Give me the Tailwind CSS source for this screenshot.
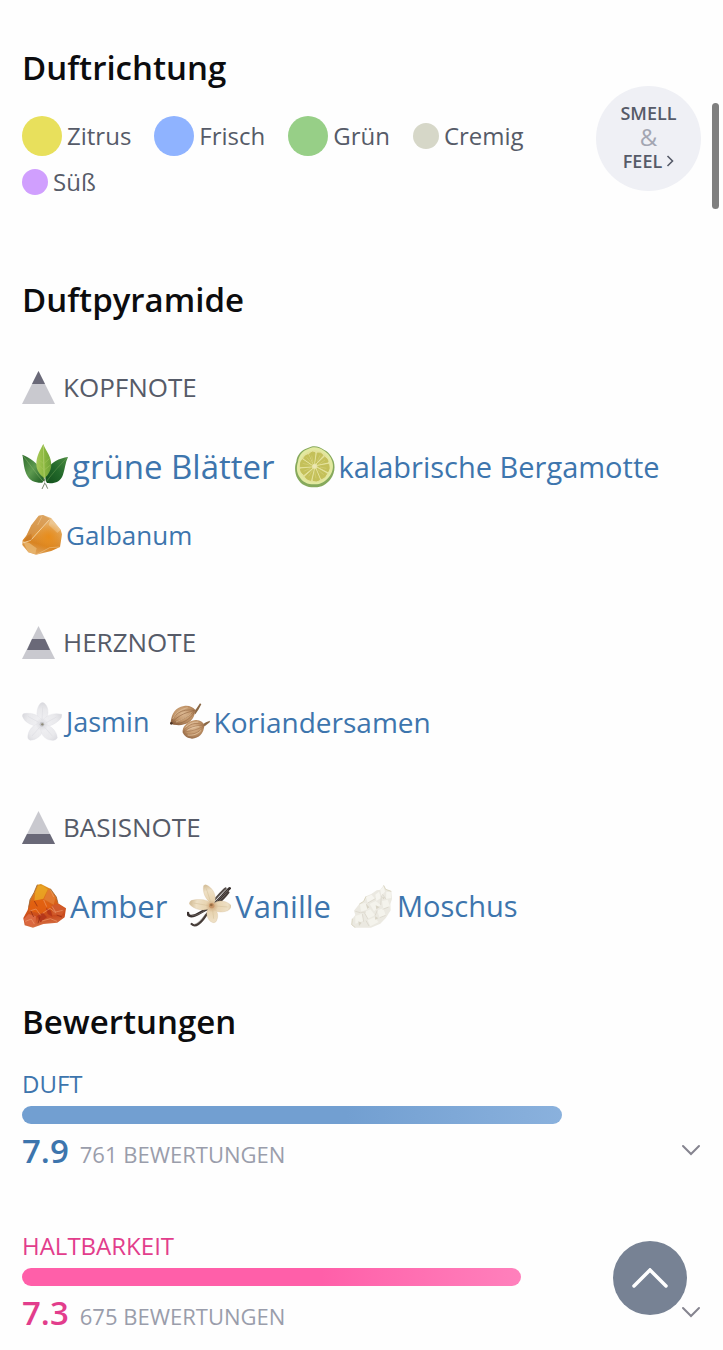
<!DOCTYPE html>
<html lang="de">
<head>
    <meta charset="UTF-8">
    <meta name="viewport" content="width=device-width, initial-scale=1.0">
    <title>Duftpyramide und Bewertungen</title>
    <script src="https://cdn.jsdelivr.net/npm/@tailwindcss/browser@4"></script>
</head>
<body class="bg-[#fefefe] min-h-screen font-['Open_Sans',sans-serif] text-[#565b68]">
    <main class="px-[22px] pt-[46px] pb-2">

        <!-- Scent direction -->
        <section class="flex items-start justify-between">
            <div class="flex-1">
                <h2 class="text-[33px] leading-[44px] font-semibold text-[#0c0c0e]">Duftrichtung</h2>
                <ul class="mt-[26px] flex flex-wrap gap-x-[23px] gap-y-2 text-[24px] leading-9">
                    <li class="flex items-center gap-[5px]"><span class="size-10 rounded-full bg-[#e8e05c]"></span>Zitrus</li>
                    <li class="flex items-center gap-[5px]"><span class="size-10 rounded-full bg-[#8fb3ff]"></span>Frisch</li>
                    <li class="flex items-center gap-[5px]"><span class="size-10 rounded-full bg-[#97cf87]"></span>Grün</li>
                    <li class="flex items-center gap-[5px]"><span class="size-[26px] rounded-full bg-[#d6d7c8]"></span>Cremig</li>
                    <li class="flex items-center gap-[5px]"><span class="size-[26px] rounded-full bg-[#d09ffe]"></span>Süß</li>
                </ul>
            </div>
            <button type="button" class="mt-10 size-[105px] shrink-0 rounded-full bg-[#eff0f5] pb-1 text-[18px] leading-6 font-semibold text-[#565b68]">
                <span class="block">SMELL</span>
                <span class="block text-[24px] font-normal text-[#a3a6b2]">&amp;</span>
                <span class="flex items-center justify-center gap-1">FEEL
                    <svg class="w-2 h-3" viewBox="0 0 8 12" fill="none" stroke="#565b68" stroke-width="1.6"><path d="M1.5 1l5 5-5 5"/></svg>
                </span>
            </button>
        </section>

        <!-- Fragrance pyramid -->
        <section class="mt-[78px]">
            <h2 class="text-[33px] leading-[44px] font-semibold text-[#0c0c0e]">Duftpyramide</h2>

            <h3 class="mt-12 flex items-center gap-2 text-[26px] leading-[34px]">
                <svg class="size-[33px]" viewBox="0 0 33 33"><path d="M16.5 0L33 33H0z" fill="#c9c9cf"/><path d="M16.5 0L23 13H10z" fill="#6a6978"/></svg>
                KOPFNOTE
            </h3>
            <div class="mt-[39px] flex flex-wrap gap-x-5 gap-y-5 text-[#3d75ad]">
                <a href="#" class="flex h-12 items-center gap-1 text-[33px]">
                    <svg class="size-[46px]" viewBox="0 0 138 138">
                        <defs>
                            <linearGradient id="leafMid" x1="0" x2="1"><stop offset="0" stop-color="#a9c95a"/><stop offset=".5" stop-color="#8db940"/><stop offset="1" stop-color="#6fa238"/></linearGradient>
                            <linearGradient id="leafLeft" x1="0" y1="0" x2="1" y2="1"><stop offset="0" stop-color="#2c6a2c"/><stop offset=".5" stop-color="#5e9a50"/><stop offset="1" stop-color="#1b5a20"/></linearGradient>
                            <linearGradient id="leafRight" x1="1" y1="0" x2="0" y2="1"><stop offset="0" stop-color="#4d8c42"/><stop offset=".5" stop-color="#22682a"/><stop offset="1" stop-color="#124f1b"/></linearGradient>
                        </defs>
                        <path d="M1 32C24 42 48 56 62 84C68 98 68 106 65 116C44 118 23 113 13 90C4 68 5 48 1 32z" fill="url(#leafLeft)"/>
                        <path d="M3 35C20 56 43 90 64 113" fill="none" stroke="#8ab56c" stroke-width="1.5"/>
                        <path d="M138 39C112 43 86 54 76 78C68 94 69 106 74 117C98 119 115 115 123 92C129 74 130 56 138 39z" fill="url(#leafRight)"/>
                        <path d="M135 42C116 60 91 88 73 113" fill="none" stroke="#6b9f55" stroke-width="1.5"/>
                        <path d="M64 0C54 19 43 36 43 61C43 80 54 92 67 103C80 91 91 75 87 53C83 29 70 19 64 0z" fill="url(#leafMid)"/>
                        <path d="M64 4L67 112" stroke="#c0d780" stroke-width="2"/>
                        <path d="M66 60l-17-14M66 78l-14-13M67 58l16-15M67 78l17-14" stroke="#a8c85e" stroke-width="1.5"/>
                        <path d="M67 104l2 12-9 19M69 116l8 18" fill="none" stroke="#75816a" stroke-width="3"/>
                        <path d="M66 112l-4 7M69 112l4 7" stroke="#fff" stroke-width="4"/>
                    </svg>
                    grüne Blätter
                </a>
                <a href="#" class="flex h-12 items-center gap-1 text-[29px]">
                    <svg class="h-[42px] w-10" viewBox="0 0 120 126">
                        <path d="M48 2C64-2 75 4 88 12C104 20 111 34 116 46C122 66 117 85 107 99C94 116 78 125 57 124C36 124 18 116 8 98C-1 83-2 62 4 47C6 27 19 14 31 9z" fill="#86a95c"/>
                        <path d="M48 5C64 1 75 6 87 14C102 23 108 35 112 47C117 65 112 80 102 93C89 109 75 116 57 115C38 115 22 108 13 92C4 78 4 61 9 47C11 30 21 17 32 12z" fill="#e2e9a0"/>
                        <ellipse cx="59" cy="61" rx="46" ry="48" fill="#e3e19a"/>
                        <g fill="#c4c059" stroke="#c4c059" stroke-width="3" stroke-linejoin="round">
                            <path d="M56 53L43 24Q52 14 60 20z"/>
                            <path d="M62 52L67 21Q79 19 84 28z"/>
                            <path d="M66 55L89 33Q100 40 99 48z"/>
                            <path d="M68 61L101 55Q105 68 99 77z"/>
                            <path d="M66 67L95 83Q90 96 79 98z"/>
                            <path d="M61 70L74 101Q64 108 54 103z"/>
                            <path d="M55 70L47 103Q35 101 30 92z"/>
                            <path d="M51 66L26 86Q17 79 16 69z"/>
                            <path d="M50 60L16 62Q15 47 22 41z"/>
                            <path d="M52 55L26 37Q30 27 40 26z"/>
                        </g>
                        <path d="M54 49l-4-20M66 48l9-20M72 55l18-13M74 63l20 4M68 71l18 15M59 75l4 22M53 73l-12 18M46 67l-20 9M47 58l-24-6M50 51L35 34" stroke="#d3cf79" stroke-width="2"/>
                        <circle cx="59" cy="61" r="6" fill="#ece6b4"/>
                    </svg>
                    kalabrische Bergamotte
                </a>
                <a href="#" class="flex h-12 items-center gap-1 text-[26px]">
                    <svg class="size-10" viewBox="0 0 120 120">
                        <defs>
                            <linearGradient id="galbanum" x1=".7" y1="0" x2=".4" y2="1"><stop offset="0" stop-color="#e9bd80"/><stop offset=".45" stop-color="#e09c48"/><stop offset=".75" stop-color="#d98422"/><stop offset="1" stop-color="#dfa45c"/></linearGradient>
                            <radialGradient id="galbanumGlow" gradientUnits="userSpaceOnUse" cx="80" cy="66" r="42"><stop offset="0" stop-color="#e88d1b"/><stop offset="1" stop-color="#e88d1b" stop-opacity="0"/></radialGradient>
                        </defs>
                        <path d="M50 2L63 0L87 9L116 44L120 58L114 96L88 108L42 119L19 112L1 90L2 76L14 61L28 31z" fill="url(#galbanum)"/>
                        <path d="M50 2L63 0L84 12L62 36L31 59L10 68L28 31z" fill="#d2914a" opacity=".55"/>
                        <path d="M87 9L116 44L106 54L80 30z" fill="#f0cf9f" opacity=".7"/>
                        <path d="M50 2L63 0L87 9L116 44L120 58L114 96L88 108L42 119L19 112L1 90L2 76L14 61L28 31z" fill="url(#galbanumGlow)"/>
                        <path d="M2 78L22 84L44 100L40 117L19 112z" fill="#e9b671" opacity=".8"/>
                        <path d="M82 14L26 76L2 84" fill="none" stroke="#f5d9ae" stroke-width="3" opacity=".85"/>
                        <path d="M45 118l38-20 30-2M60 4L47 30" fill="none" stroke="#f3d1a0" stroke-width="2" opacity=".7"/>
                        <path d="M16 62l12-6 2 18-24 6z" fill="#bf7224" opacity=".5"/>
                    </svg>
                    Galbanum
                </a>
            </div>

            <h3 class="mt-[66px] flex items-center gap-2 text-[26px] leading-[34px]">
                <svg class="size-[33px]" viewBox="0 0 33 33"><path d="M16.5 0L33 33H0z" fill="#c9c9cf"/><path d="M10 13h13l5 11H5z" fill="#6a6978"/></svg>
                HERZNOTE
            </h3>
            <div class="mt-[39px] flex flex-wrap gap-x-5 gap-y-5 text-[#3d75ad]">
                <a href="#" class="flex h-12 items-center gap-1 text-[27px]">
                    <svg class="size-10" viewBox="0 0 120 120">
                        <defs>
                            <radialGradient id="jasmin" gradientUnits="userSpaceOnUse" cx="60" cy="67" r="65"><stop offset="0" stop-color="#d6d6db"/><stop offset=".3" stop-color="#eeeef1"/><stop offset=".7" stop-color="#e9e9ec"/><stop offset="1" stop-color="#d9d9de"/></radialGradient>
                        </defs>
                        <g fill="url(#jasmin)" stroke="#dedee3" stroke-width="1">
                            <path d="M52 64C42 46 42 21 54 5Q62-2 69 5C82 19 80 44 68 64z"/>
                            <path d="M56 75C38 72 8 66 1 42Q1 33 12 34C34 32 56 42 62 60z"/>
                            <path d="M58 62C68 42 92 30 119 37Q121 46 113 53C98 68 80 74 64 74z"/>
                            <path d="M52 64C66 66 68 72 66 80C60 100 44 114 24 115Q15 111 18 99C21 82 34 68 52 64z"/>
                            <path d="M60 66C82 66 104 84 106 108Q101 117 89 115C68 113 56 98 56 76z"/>
                        </g>
                        <path d="M60 54L62 16M50 61L18 43M72 62l32-17M53 76L30 102M68 76l24 27" stroke="#d8d8de" stroke-width="1.5"/>
                        <circle cx="60" cy="67" r="7" fill="#c4c4c9"/>
                        <circle cx="61" cy="67" r="3.5" fill="#8c8876"/>
                    </svg>
                    Jasmin
                </a>
                <a href="#" class="flex h-12 items-center gap-1 text-[28px]">
                    <svg class="size-10" viewBox="0 0 120 120">
                        <defs>
                            <radialGradient id="seed" cx=".5" cy=".4" r=".65"><stop offset="0" stop-color="#dcb994"/><stop offset=".6" stop-color="#c09367"/><stop offset="1" stop-color="#8b6040"/></radialGradient>
                        </defs>
                        <path d="M71 30L80 19L90 4L94 7L86 22L76 37z" fill="#8a6846"/>
                        <path d="M2 61C5 35 15 16 42 12C58 10 68 15 77 25C74 44 65 62 43 67C28 72 14 69 5 66z" fill="url(#seed)"/>
                        <path d="M4 63C10 37 34 19 73 25M5 64C24 57 49 50 74 27M4 64C20 45 40 32 74 26M10 67C34 65 59 55 73 31" fill="none" stroke="#8f6340" stroke-width="1.8"/>
                        <path d="M8 51C17 34 31 22 53 17M18 60c20-9 34-16 45-25" fill="none" stroke="#e1c29f" stroke-width="2"/>
                        <path d="M96 68L108 61L120 56L119 61L104 73z" fill="#8a6846"/>
                        <path d="M38 91C36 75 50 61 66 56C86 51 98 58 103 70C102 94 86 110 66 110C52 109 42 102 38 91z" fill="url(#seed)"/>
                        <path d="M39 91C53 65 78 58 102 70M39 91C62 87 84 84 102 71M41 94C62 101 85 96 101 74M39 91C57 76 77 69 102 71" fill="none" stroke="#9b6e49" stroke-width="1.6"/>
                        <path d="M47 76C57 65 69 60 85 60M53 99c18 2 31-4 40-14M52 85c13-8 25-11 36-11" fill="none" stroke="#e8cdae" stroke-width="2"/>
                        <circle cx="4" cy="64" r="4" fill="#4e3525"/>
                    </svg>
                    Koriandersamen
                </a>
            </div>

            <h3 class="mt-16 flex items-center gap-2 text-[26px] leading-[34px]">
                <svg class="size-[33px]" viewBox="0 0 33 33"><path d="M16.5 0L33 33H0z" fill="#c9c9cf"/><path d="M5 23h23l5 10H0z" fill="#6a6978"/></svg>
                BASISNOTE
            </h3>
            <div class="mt-[38px] flex flex-wrap gap-x-5 gap-y-5 text-[#3d75ad]">
                <a href="#" class="flex h-12 items-center gap-1 text-[31px]">
                    <svg class="size-11" viewBox="0 0 132 132">
                        <defs>
                            <linearGradient id="amber" x1=".4" y1="0" x2=".5" y2="1"><stop offset="0" stop-color="#e19a22"/><stop offset=".4" stop-color="#dc6517"/><stop offset=".75" stop-color="#c94a1d"/><stop offset="1" stop-color="#d9794c"/></linearGradient>
                        </defs>
                        <path d="M46 2L57 0L85 14L103 39L108 58L132 73L128 100L106 116L64 120L33 131L8 124L4 102L17 78L24 47L36 26z" fill="url(#amber)"/>
                        <path d="M48 6L62 5L77 16L64 44L37 50L40 24z" fill="#eba823" opacity=".8"/>
                        <path d="M80 15L101 39L95 62L66 46z" fill="#e27a30"/>
                        <path d="M27 51L61 47L89 65L64 91L21 80z" fill="#e4600f" opacity=".8"/>
                        <path d="M91 64L108 60L130 74L120 93L91 92z" fill="#d15a2c"/>
                        <path d="M5 105L20 90L42 97L40 124L12 122z" fill="#db6840"/>
                        <path d="M45 96l18-10 12 14-20 15zM72 72l15 8 4 18-14-8z" fill="#b5371a"/>
                        <path d="M23 81l19-6 14 19M62 88l22-15 18 14M60 111l25-7 20 8M90 67l11 17 21-5M10 112l18-7 9 15M65 48l9 20M86 18l9 21" fill="none" stroke="#f2a475" stroke-width="2.5" opacity=".7"/>
                        <path d="M26 80l9 19M104 93l16 6M48 118l6-20M37 51l9 16" stroke="#8d2814" stroke-width="2"/>
                        <path d="M46 2L36 26L24 47L20 71M85 14L103 39L108 58" fill="none" stroke="#9b6435" stroke-width="2.5"/>
                    </svg>
                    Amber
                </a>
                <a href="#" class="flex h-12 items-center gap-1 text-[31px]">
                    <svg class="size-11" viewBox="0 0 132 132">
                        <defs>
                            <radialGradient id="vanilla" gradientUnits="userSpaceOnUse" cx="75" cy="66" r="63"><stop offset="0" stop-color="#c99d6e"/><stop offset=".3" stop-color="#e8d4b1"/><stop offset=".75" stop-color="#eee0c5"/><stop offset="1" stop-color="#d7c29d"/></radialGradient>
                        </defs>
                        <g fill="none" stroke-linecap="round">
                            <path d="M128 13C109 29 88 60 63 74C44 80 27 99 10 96Q2 94 3 87" stroke="#39312f" stroke-width="8"/>
                            <path d="M124 25C105 52 77 68 58 92C41 119 25 131 14 120" stroke="#463d39" stroke-width="7"/>
                            <path d="M116 13C101 24 90 41 79 51" stroke="#554d49" stroke-width="6"/>
                            <path d="M122 19C102 36 87 58 63 75M54 92C42 109 31 119 22 121M51 81c-15 10-26 14-36 13" stroke="#978c85" stroke-width="1.5"/>
                        </g>
                        <g fill="url(#vanilla)" stroke="#d3bb97" stroke-width="1">
                            <path d="M80 62C54 50 46 22 50 5Q54-1 64 6C84 20 90 42 80 62z"/>
                            <path d="M76 70C54 84 22 78 7 60Q7 49 19 48C44 44 64 48 78 60z"/>
                            <path d="M72 68C84 46 114 46 132 64Q134 73 122 80C101 88 82 84 72 68z"/>
                            <path d="M70 66C96 78 96 100 86 114Q79 119 70 112C56 98 56 78 70 66z"/>
                        </g>
                        <path d="M72 57L58 14M65 65L20 57M86 66l36 3M77 78l3 26" stroke="#d3be96" stroke-width="1.5"/>
                        <path d="M66 68q-2-10 8-11 9 1 8 11-7 9-16 0z" fill="#c89567"/>
                        <circle cx="73" cy="63" r="4" fill="#956d42"/>
                    </svg>
                    Vanille
                </a>
                <a href="#" class="flex h-12 items-center gap-1 text-[29px]">
                    <svg class="h-[43px] w-[42px]" viewBox="0 0 126 129">
                        <path d="M98 1L104 13L121 19L123 42L118 57L119 76L105 98L88 116L60 128H13L2 119L4 101L13 90L9 77L25 57L38 49L45 34L61 27L77 16L88 14z" fill="#ebe9e1"/>
                        <path d="M88 15L98 4L102 20L91 32zM106 20l13 1 1 18-15 3zM45 36l17-7 10 12-22 13zM73 29l11-9 6 19-14 9z" fill="#f6f5ef"/>
                        <path d="M27 58l18-5 8 18-23 10zM56 57l18-9 15 12-20 19zM93 48l17-4 7 20-20 7zM13 93l20-7 5 21-25 9zM40 81l18-8 14 18-21 10zM78 76l19-6 7 21-18 7zM50 106l20-9 13 14-25 13z" fill="#f4f3ec"/>
                        <path d="M50 54l23-13M91 32l-2 28M105 42l-11-14M29 82l16-1M72 92l7-16M34 87l4 23M51 102l-11-19M86 98l18-7M54 123l-9-16M113 66l-18 7M13 79l15 4" fill="none" stroke="#d6d2c5" stroke-width="2"/>
                        <path d="M44 55l11 12-6 5zM74 61l12 5-10 7zM22 109l10 4-8 10zM73 94l9 6-10 4zM93 35l9 3-5 5z" fill="#d9d5c7"/>
                        <path d="M98 1l6 12 17 6M45 34L38 49 25 57M4 101l-2 18 11 9" fill="none" stroke="#cfc8ad" stroke-width="2"/>
                    </svg>
                    Moschus
                </a>
            </div>
        </section>

        <!-- Ratings -->
        <section class="mt-[70px]">
            <h2 class="text-[33px] leading-[44px] font-semibold text-[#0c0c0e]">Bewertungen</h2>

            <div class="mt-6">
                <h3 class="text-[24px] leading-8 text-[#3d75ad]">DUFT</h3>
                <div class="mt-[6px] -mr-1">
                    <div class="h-[18px] rounded-full bg-linear-to-r from-[#729fd1] from-60% to-[#8ab1dd]" style="width: 79%"></div>
                </div>
                <div class="mt-[5px] flex items-center justify-between">
                    <p class="flex items-baseline gap-[11px] leading-[44px]">
                        <span class="text-[33px] font-semibold text-[#3d75ad]">7.9</span>
                        <span class="text-[22px] text-[#9a9dab]">761 BEWERTUNGEN</span>
                    </p>
                    <button type="button" class="pb-[6px]" aria-label="Duft aufklappen">
                        <svg class="h-3 w-5" viewBox="0 0 20 12" fill="none" stroke="#85848f" stroke-width="2" stroke-linecap="round"><path d="M2 2l8 8 8-8"/></svg>
                    </button>
                </div>
            </div>

            <div class="mt-[54px]">
                <h3 class="text-[24px] leading-8 text-[#e23d8c]">HALTBARKEIT</h3>
                <div class="mt-[6px] -mr-1">
                    <div class="h-[18px] rounded-full bg-linear-to-r from-[#ff5fa9] from-60% to-[#ff80bc]" style="width: 73%"></div>
                </div>
                <div class="mt-[5px] flex items-center justify-between">
                    <p class="flex items-baseline gap-[11px] leading-[44px]">
                        <span class="text-[33px] font-semibold text-[#e23d8c]">7.3</span>
                        <span class="text-[22px] text-[#9a9dab]">675 BEWERTUNGEN</span>
                    </p>
                    <button type="button" class="pb-[6px]" aria-label="Haltbarkeit aufklappen">
                        <svg class="h-3 w-5" viewBox="0 0 20 12" fill="none" stroke="#85848f" stroke-width="2" stroke-linecap="round"><path d="M2 2l8 8 8-8"/></svg>
                    </button>
                </div>
            </div>
        </section>
    </main>

    <!-- Scroll indicator -->
    <div class="fixed top-[103px] right-1 h-[106px] w-[7px] rounded-full bg-[#7f7f7f]"></div>

    <!-- Back to top -->
    <button type="button" aria-label="Nach oben" class="fixed right-9 bottom-[35px] flex size-[74px] items-center justify-center rounded-full bg-[#778294]">
        <svg class="h-5 w-9" viewBox="0 0 36 20" fill="none" stroke="#fff" stroke-width="3.5" stroke-linecap="round"><path d="M2 18L18 2l16 16"/></svg>
    </button>
</body>
</html>
